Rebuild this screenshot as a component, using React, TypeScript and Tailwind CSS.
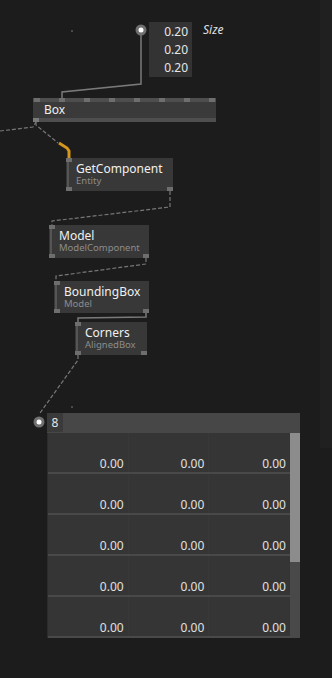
import React from "react";

const font = { fontFamily: '"Noto Sans", "Open Sans", sans-serif' };

function Pin({ cls }: { cls: string }) {
  return <div className={`absolute w-[6px] h-[4px] bg-[#6e6e6e] ${cls}`} />;
}

function NodeInner({ title, sub }: { title: string; sub: string }) {
  return (
    <>
      <div className="absolute left-[1px] top-0 bottom-0 w-[2px] bg-[#555555]" />
      <Pin cls="left-0 top-0" />
      <Pin cls="left-0 bottom-0" />
      <Pin cls="right-0 bottom-0" />
      <div className="pl-[10px] pt-[4px] flex flex-col">
        <span className="text-[12px] leading-[14px] text-[#f0f0f0]">{title}</span>
        <span className="text-[9.5px] leading-[10px] text-[#8c8c8c]">{sub}</span>
      </div>
    </>
  );
}

const rows = [0, 1, 2, 3, 4];

export default function App() {
  return (
    <div className="relative w-[332px] h-[678px] bg-[#1c1c1c] overflow-hidden" style={font}>
      {/* right lighter strip */}
      <div className="absolute right-0 top-0 w-[12px] h-[448px] bg-[#202020]" />

      {/* links */}
      <svg className="absolute left-0 top-0" width="332" height="678">
        <path d="M141 35 L141 84 L62 92 L62 98" stroke="#7a7a7a" strokeWidth="1.5" fill="none" />
        <path d="M0 131 L33 127 L36 122" stroke="#777" strokeWidth="1.2" strokeDasharray="4 2" fill="none" />
        <path d="M36 122 L36 125 L58 143" stroke="#777" strokeWidth="1.2" strokeDasharray="4 2" fill="none" />
        <path d="M59 143 L67 148 L69 151 L69 158" stroke="#d4961c" strokeWidth="3" fill="none" />
        <path d="M170 191 L170 207 L52 221 L52 225" stroke="#777" strokeWidth="1.2" strokeDasharray="4 2" fill="none" />
        <path d="M146 258 L146 264 L56 276 L56 281" stroke="#777" strokeWidth="1.2" strokeDasharray="4 2" fill="none" />
        <path d="M146 313 L146 317 L78 318 L78 322" stroke="#7a7a7a" strokeWidth="1.5" fill="none" />
        <path d="M78 355 L78 360 L40 413" stroke="#777" strokeWidth="1.2" strokeDasharray="4 2" fill="none" />
        <circle cx="141" cy="30" r="5.5" fill="#707070" />
        <circle cx="141" cy="30" r="2.5" fill="#ffffff" />
        <circle cx="39" cy="422" r="5.5" fill="#707070" />
        <circle cx="39" cy="422" r="2.5" fill="#ffffff" />
      </svg>

      {/* tiny dots */}
      <div className="absolute left-[71px] top-[30px] w-[2px] h-[2px] bg-[#4a4a4a]" />
      <div className="absolute left-[71px] top-[406px] w-[2px] h-[2px] bg-[#4a4a4a]" />

      {/* Size IOBox */}
      <div className="absolute left-[149px] top-[22px] w-[43px] h-[55px] bg-[#333333] flex flex-col items-end pr-[4px] pt-[1px] text-[12px] leading-[18px] text-[#e6e6e6]">
        <span>0.20</span>
        <span>0.20</span>
        <span>0.20</span>
      </div>
      <div className="absolute left-[203px] top-[21px] text-[12px] leading-[18px] italic text-[#e0e0e0]">Size</div>

      {/* Box node */}
      <div className="absolute left-[33px] top-[98px] w-[183px] h-[24px] bg-[#3a3a3a] flex flex-col">
        <div className="relative h-[4px] bg-[#4e4e4e]">
          <Pin cls="left-[1px] top-0" />
          <Pin cls="left-[26px] top-0" />
          <Pin cls="left-[51px] top-0" />
          <Pin cls="left-[76px] top-0" />
          <Pin cls="left-[101px] top-0" />
          <Pin cls="left-[126px] top-0" />
          <Pin cls="left-[151px] top-0" />
          <Pin cls="left-[176px] top-0" />
        </div>
        <div className="flex-1 pl-[11px] text-[12px] leading-[16px] text-[#f0f0f0]">Box</div>
        <div className="relative h-[4px] bg-[#4e4e4e]">
          <div className="absolute left-0 top-0 w-[6px] h-[4px] bg-[#7a7a7a]" />
        </div>
      </div>

      {/* GetComponent */}
      <div className="absolute left-[66px] top-[158px] w-[107px] h-[33px] bg-[#383838]">
        <NodeInner title="GetComponent" sub="Entity" />
      </div>

      {/* Model */}
      <div className="absolute left-[49px] top-[225px] w-[100px] h-[33px] bg-[#383838]">
        <NodeInner title="Model" sub="ModelComponent" />
      </div>

      {/* BoundingBox */}
      <div className="absolute left-[54px] top-[281px] w-[95px] h-[32px] bg-[#383838]">
        <NodeInner title="BoundingBox" sub="Model" />
      </div>

      {/* Corners */}
      <div className="absolute left-[75px] top-[322px] w-[72px] h-[33px] bg-[#383838]">
        <NodeInner title="Corners" sub="AlignedBox" />
      </div>

      {/* Spreadsheet IOBox */}
      <div className="absolute left-[47px] top-[413px] w-[253px] h-[225px] flex flex-col bg-[#353535]">
        <div className="h-[20px] bg-[#474747] flex">
          <div className="w-[16px] h-[19px] bg-[#3a3a3a] flex items-center justify-center text-[12px] text-[#e6e6e6]">8</div>
        </div>
        <div className="flex flex-1">
          <div className="flex-1 flex flex-col border-l border-[#2c2c2c]">
            {rows.map((r) => (
              <div key={r} className="h-[41px] grid grid-cols-3 border-b-2 border-[#494949]">
                <div className="flex items-end justify-end pr-[4px] text-[12px] leading-[16px] text-[#e0e0e0] border-r border-[#383838]">0.00</div>
                <div className="flex items-end justify-end pr-[4px] text-[12px] leading-[16px] text-[#e0e0e0] border-r border-[#383838]">0.00</div>
                <div className="flex items-end justify-end pr-[4px] text-[12px] leading-[16px] text-[#e0e0e0]">0.00</div>
              </div>
            ))}
          </div>
          <div className="w-[10px] flex flex-col bg-[#494949]">
            <div className="h-[129px] bg-[#8c8c8c]" />
          </div>
        </div>
      </div>
    </div>
  );
}
